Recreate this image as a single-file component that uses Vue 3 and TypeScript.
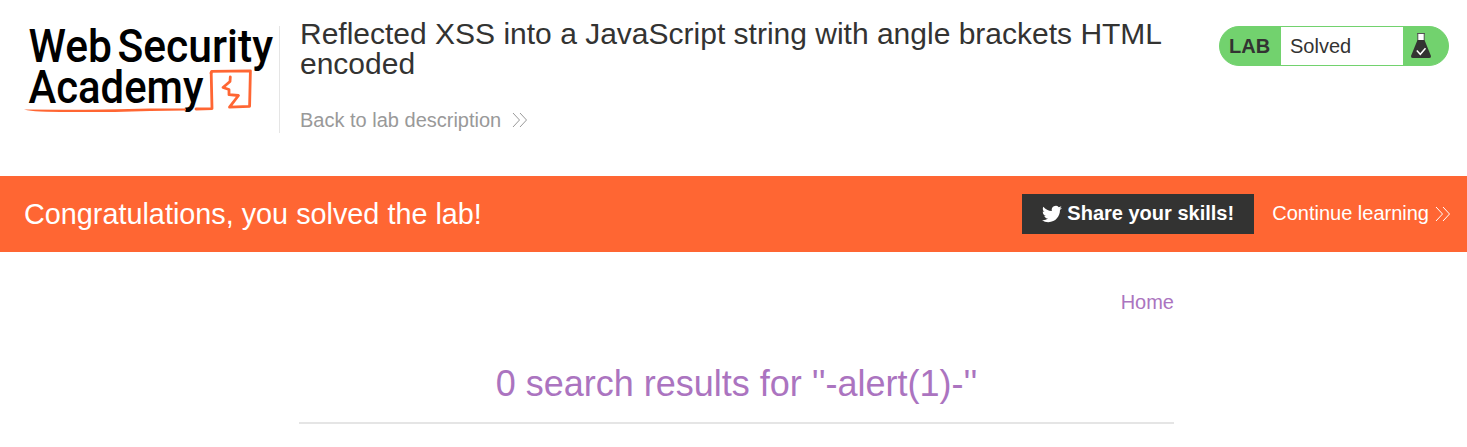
<script setup lang="ts">
const title = 'Reflected XSS into a JavaScript string with angle brackets HTML encoded'
const heading = "0 search results for ''-alert(1)-''"
</script>

<template>
  <div class="page">
    <header class="header">
      <svg class="logo" width="264" height="110" viewBox="15 15 264 110" role="img" aria-label="Web Security Academy">
        <g class="wordmark">
          <text x="28.500" y="61.500" textLength="83.500" lengthAdjust="spacingAndGlyphs">Web</text>
          <text x="117.500" y="61.500" textLength="155.500" lengthAdjust="spacingAndGlyphs">Security</text>
          <text x="28.500" y="103" textLength="175" lengthAdjust="spacingAndGlyphs">Academy</text>
        </g>
        <path d="M24 109.500 Q45 109.600 80 109.700 T150 108.600 L186 108.400 V110.600 L150 110.900 Q110 112.200 80 112.100 T40 111.600 Q30 111 24 109.500Z" fill="#ff6633" />
        <g fill="none" stroke="#ff6633" stroke-width="2.8" stroke-linejoin="round" stroke-linecap="round">
          <path d="M196 109 L212 108.600 L211.200 73" />
          <path d="M211 73 L211.700 71.300 L250.400 70.800 L249.600 106.300 L229.500 107.200 L238.500 95.500 L229 94.700 L229 89.500 L223 87.500 L230 81.500 L230.300 77" />
        </g>
      </svg>
      <div class="title-box">
        <h2 class="title">{{ title }}</h2>
        <a class="back">Back to lab description
          <svg width="16" height="16" viewBox="0 0 16 16" fill="none" stroke="#999" stroke-width="1"><path d="M1 1l6.500 7L1 15M8 1l6.500 7L8 15" /></svg>
        </a>
      </div>
      <div class="status">
        <span class="tag">LAB</span>
        <span class="state">Solved</span>
        <span class="flask">
          <svg width="22" height="26" viewBox="0 0 22 26">
            <path d="M8 1h6v7H8z" fill="#fff" />
            <path d="M7 .5h8M7.800 .5v7M14.200 .5v7" stroke="#555" stroke-width="1" fill="none" />
            <path d="M7.500 7h7L20.800 22.500q.6 2.500-1.600 2.500H2.800Q.6 25 1.200 22.500z" fill="#333332" />
            <path d="M6.800 17.600l3.500 3.700 5.200-6" fill="none" stroke="#fff" stroke-width="1.500" />
          </svg>
        </span>
      </div>
    </header>

    <section class="banner">
      <span class="congrats">Congratulations, you solved the lab!</span>
      <a class="share">
        <svg width="20" height="20" viewBox="0 0 24 24"><path fill="#fff" d="M23.950 4.570a10 10 0 0 1-2.820.77 4.960 4.960 0 0 0 2.160-2.720c-.95.550-2 .950-3.130 1.180a4.920 4.920 0 0 0-8.380 4.480C7.690 8.100 4.070 6.130 1.640 3.160a4.820 4.820 0 0 0-.67 2.480c0 1.710.87 3.210 2.190 4.100a4.900 4.900 0 0 1-2.230-.62v.06a4.920 4.920 0 0 0 3.950 4.830 5 5 0 0 1-2.210.08 4.940 4.940 0 0 0 4.600 3.420A9.870 9.870 0 0 1 0 19.540a14 14 0 0 0 7.550 2.210c9.050 0 14-7.500 14-13.980 0-.21 0-.42-.02-.63a9.940 9.940 0 0 0 2.460-2.550z" /></svg>
        <span>Share your skills!</span>
      </a>
      <a class="continue"><span>Continue learning</span>
        <svg width="16" height="16" viewBox="0 0 16 16" fill="none" stroke="#fff" stroke-width="1"><path d="M1 1l6.500 7L1 15M8 1l6.500 7L8 15" /></svg>
      </a>
    </section>

    <main class="content">
      <nav class="nav"><a>Home</a></nav>
      <h1 class="heading">{{ heading }}</h1>
      <hr class="rule" />
    </main>
  </div>
</template>

<style scoped>
.page { width: 1467px; height: 447px; background: #fff; overflow: hidden; font-family: "Liberation Sans", Arial, sans-serif; font-size: 20px; color: #333332; }
.header { display: flex; height: 176px; box-sizing: border-box; padding: 15px 18px 0 15px; }
.logo { flex: none; overflow: visible; }
.wordmark { font-family: Roboto, sans-serif; font-size: 46px; font-weight: 500; fill: #000; }
.title-box { width: 900px; height: 107px; margin-top: 11px; border-left: 1px solid #e5e5e5; padding-left: 20px; box-sizing: border-box; }
.title { margin: -7px 0 0; font-size: 30px; line-height: 30px; font-weight: 400; }
.back { display: flex; align-items: center; gap: 11px; margin-top: 29px; line-height: 24px; color: #999; }
.status { display: flex; margin: 11px 0 0 auto; width: 230px; height: 40px; box-sizing: border-box; border: 1px solid #72d26e; border-radius: 20px; background: #72d26e; overflow: hidden; line-height: 38px; }
.tag { width: 61px; padding-left: 9px; box-sizing: border-box; font-weight: 700; }
.state { width: 122px; padding-left: 9px; box-sizing: border-box; background: #fff; }
.flask { padding: 6px 0 0 7px; line-height: 0; }
.banner { display: flex; align-items: center; height: 76px; box-sizing: border-box; padding: 0 16px 0 24px; background: #ff6633; color: #fff; }
.congrats { font-size: 28.8px; }
.share { display: flex; align-items: center; justify-content: center; gap: 5px; width: 232px; height: 40px; margin: 0 18px 0 auto; background: #333332; font-weight: 700; }
.share span, .continue span { position: relative; top: -1px; }
.continue { display: flex; align-items: center; gap: 6px; }
.content { width: 875px; margin-left: 299px; padding-top: 38px; color: #ab74c0; }
.nav { text-align: right; line-height: 24px; }
.heading { margin: 48px 0 0; text-align: center; font-size: 36px; line-height: 44px; font-weight: 400; }
.rule { height: 2px; margin: 16px 0 0; border: 0; background: #e5e5e5; }
</style>

<style>
body { background: #fff; overflow: hidden; }
</style>
